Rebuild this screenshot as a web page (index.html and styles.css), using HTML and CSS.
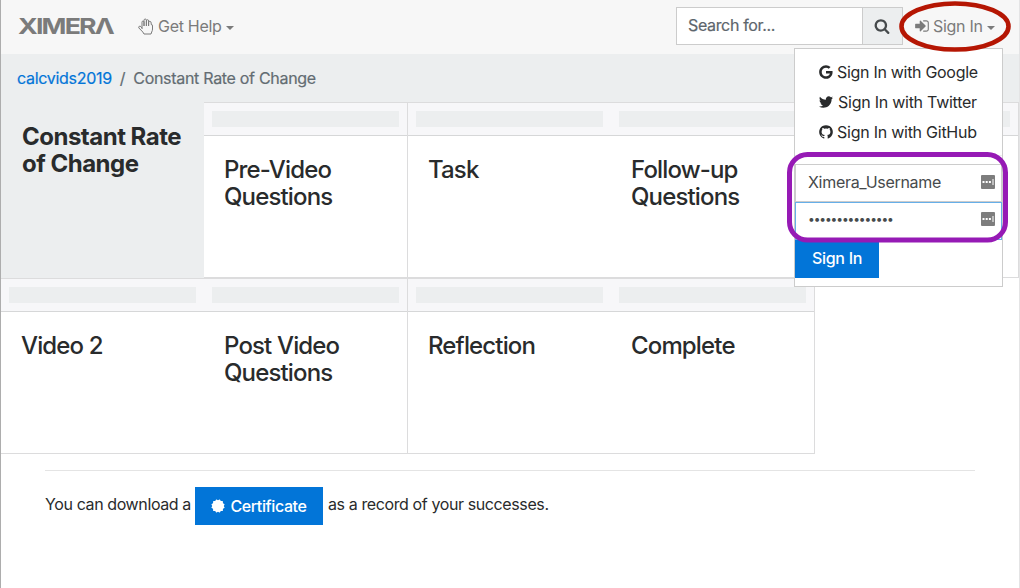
FILE: index.html
```
<!DOCTYPE html>
<html lang="en">
<head>
<meta charset="utf-8">
<title>Constant Rate of Change - Ximera</title>
<link rel="stylesheet" href="styles.css">
</head>
<body>
<div class="page">
  <nav class="navbar">
    <svg class="brand" width="96" height="20" viewBox="0 0 96 20" role="img" aria-label="XIMERA"><text x="0" y="17.500" textLength="95" lengthAdjust="spacingAndGlyphs">XIMERΛ</text></svg>
    <a class="nav-link help">
      <svg class="outline" width="16" height="17" viewBox="0 0 16 17"><path d="M4 10.500V4.200Q4 3 5 3T6 4.200V8V2.500Q6 1 7.200 1T8.400 2.500V8V2.900Q8.400 1.700 9.500 1.700T10.600 2.900V8V4.500Q10.600 3.300 11.800 3.300Q13 3.300 13.200 5V6.500Q14.500 6.300 14.500 8V11Q14.500 12.500 13.700 14L13 16H6L4.800 14L.9 10Q.3 9 1.200 8.300Q2.200 7.800 3 8.800L4 10"/></svg>
      <span>Get Help</span><i class="caret"></i>
    </a>
    <div class="search">
      <div class="search-field">Search for...</div>
      <button class="search-btn"><svg width="16" height="16" viewBox="0 0 1792 1792"><path d="M1216 832q0-185-131.500-316.500t-316.500-131.500-316.500 131.500-131.500 316.500 131.500 316.500 316.500 131.500 316.500-131.500 131.500-316.500zm512 832q0 52-38 90t-90 38q-54 0-90-38l-343-342q-179 124-399 124-143 0-273.500-55.500t-225-150-150-225-55.500-273.500 55.500-273.500 150-225 225-150 273.500-55.500 273.500 55.500 225 150 150 225 55.500 273.500q0 220-124 399l343 343q37 37 37 90z"/></svg></button>
    </div>
    <a class="nav-link signin">
      <svg width="16" height="16" viewBox="0 0 1792 1792"><path d="M1312 896q0 26-19 45l-544 544q-19 19-45 19t-45-19-19-45v-288h-448q-26 0-45-19t-19-45v-384q0-26 19-45t45-19h448v-288q0-26 19-45t45-19 45 19l544 544q19 19 19 45zm352-352v704q0 119-84.500 203.500t-203.500 84.500h-320q-13 0-22.500-9.500t-9.500-22.500q0-4-1-20t-.5-26.500 3-23.500 10-19.500 20.500-6.500h320q66 0 113-47t47-113v-704q0-66-47-113t-113-47h-312l-11.500-1-11.500-3-8-5.500-7-9-2-13.500q0-4-1-20t-.5-26.500 3-23.500 10-19.500 20.500-6.500h320q119 0 203.500 84.500t84.500 203.500z"/></svg>
      <span>Sign In</span><i class="caret"></i>
    </a>
  </nav>

  <div class="breadcrumb"><a>calcvids2019</a><span class="sep">/</span><span>Constant Rate of Change</span></div>

  <main class="cards">
    <div class="row first">
      <div class="card intro"><h2>Constant Rate of Change</h2></div>
      <div class="card"><div class="head"><i></i></div><h3>Pre-Video Questions</h3></div>
      <div class="card edge"><div class="head"><i></i></div><h3>Task</h3></div>
      <div class="card"><div class="head"><i></i></div><h3>Follow-up Questions</h3></div>
      <div class="card last"><div class="head"><i></i></div></div>
    </div>
    <div class="row second">
      <div class="card"><div class="head"><i></i></div><h3>Video 2</h3></div>
      <div class="card"><div class="head"><i></i></div><h3>Post Video Questions</h3></div>
      <div class="card edge"><div class="head"><i></i></div><h3>Reflection</h3></div>
      <div class="card last"><div class="head"><i></i></div><h3>Complete</h3></div>
    </div>
  </main>

  <footer class="record">
    <span class="before">You can download a</span>
    <a class="btn cert"><svg width="14" height="14" viewBox="-7 -7 14 14"><rect x="-4.900" y="-4.900" width="9.800" height="9.800" rx=".5"/><rect x="-4.900" y="-4.900" width="9.800" height="9.800" rx=".5" transform="rotate(30)"/><rect x="-4.900" y="-4.900" width="9.800" height="9.800" rx=".5" transform="rotate(60)"/></svg><span>Certificate</span></a>
    <span class="after">as a record of your successes.</span>
  </footer>

  <div class="menu">
    <a class="item google"><svg width="16" height="16" viewBox="0 0 1792 1792"><path d="M896 786h725q12 67 12 128 0 217-91 387.500t-259.500 266.500-386.500 96q-157 0-299-60.500t-245-163.500-163.500-245-60.500-299 60.500-299 163.500-245 245-163.500 299-60.500q300 0 515 201l-209 201q-123-119-306-119-129 0-238.500 65t-173.500 176.500-64 243.500 64 243.500 173.500 176.500 238.500 65q87 0 160-24t120-60 82-82 51.500-87 22.500-78h-436v-264z"/></svg><span>Sign In with Google</span></a>
    <a class="item twitter"><svg width="16" height="16" viewBox="0 0 1792 1792"><path d="M1684 408q-67 98-162 167 1 14 1 42 0 130-38 259.500t-115.500 248.500-184.500 210.500-258 146-323 54.500q-271 0-496-145 35 4 78 4 225 0 401-138-105-2-188-64.500t-114-159.500q33 5 61 5 43 0 85-11-112-23-185.500-111.500t-73.500-205.500v-4q68 38 146 41-66-44-105-115t-39-154q0-88 44-163 121 149 294.500 238.500t371.500 99.500q-8-38-8-74 0-134 94.500-228.500t228.500-94.500q140 0 236 102 109-21 205-78-37 115-142 178 93-10 186-50z"/></svg><span>Sign In with Twitter</span></a>
    <a class="item github"><svg width="16" height="16" viewBox="0 0 1792 1792"><path d="M896 128q209 0 385.500 103t279.500 279.500 103 385.500q0 251-146.500 451.500t-378.500 277.500q-27 5-40-7t-13-30q0-3 .5-76.500t.5-134.500q0-97-52-142 57-6 102.500-18t94-39 81-66.500 53-105 20.500-150.500q0-119-79-206 37-91-8-204-28-9-81 11t-92 44l-38 24q-93-26-192-26t-192 26q-16-11-42.500-27t-83.500-38.500-85-13.500q-45 113-8 204-79 87-79 206 0 85 20.500 150t52.500 105 80.500 67 94 39 102.500 18q-39 36-49 103-21 10-45 15t-57 5-65.500-21.500-55.500-62.500q-19-32-48.500-52t-49.500-24l-20-3q-21 0-29 4.500t-5 11.500 9 14 13 12l7 5q22 10 43.500 38t31.500 51l10 23q13 38 44 61.500t67 30 69.500 7 55.500-3.500l23-4q0 38 .5 88.500t.5 54.500q0 18-13 30t-40 7q-232-77-378.500-277.500t-146.500-451.500q0-209 103-385.500t279.500-279.500 385.500-103z"/></svg><span>Sign In with GitHub</span></a>
    <div class="divider"></div>
    <div class="field"><span>Ximera_Username</span><svg width="14" height="14" viewBox="0 0 14 14"><rect width="14" height="14" rx="1" fill="#7d7d7d"/><path d="M1.500 6h2v2h-2zM4.700 6h2v2h-2zM7.900 6h2v2h-2zM11.500 4h1v6h-1z" fill="#fff"/></svg></div>
    <div class="field active"><span class="dots">•••••••••••••••</span><svg width="14" height="14" viewBox="0 0 14 14"><rect width="14" height="14" rx="1" fill="#7d7d7d"/><path d="M1.500 6h2v2h-2zM4.700 6h2v2h-2zM7.900 6h2v2h-2zM11.500 4h1v6h-1z" fill="#fff"/></svg></div>
    <a class="btn submit"><span>Sign In</span></a>
  </div>

  <svg class="marks" width="1020" height="588"><ellipse cx="955" cy="26.500" rx="53.500" ry="23" stroke="#b51603" stroke-width="4.600"/><rect x="789.500" y="154.500" width="216" height="85.500" rx="18" stroke="#961ab5" stroke-width="5"/></svg>
</div>
</body>
</html>
```
FILE: styles.css
```
* { box-sizing: border-box; }
body { margin: 0; background: #fff; color: #292b2c; font: 16px/24px Inter, "Liberation Sans", sans-serif; letter-spacing: -0.3px; }
svg { fill: currentColor; flex: none; }
.page { position: relative; width: 1020px; height: 588px; overflow: hidden; border-left: 1px solid #adadad; border-right: 1px solid #e4e4e5; }
.navbar { height: 54px; background: #f7f7f7; display: flex; align-items: flex-start; padding: 7px 0 0 17px; }
.brand { margin-top: 9px; overflow: visible; fill: #7b7b7b; font: 700 22px Inter, sans-serif; letter-spacing: -1.5px; }
.nav-link { display: flex; align-items: center; height: 38px; color: #7b7b7b; white-space: nowrap; }
.help { margin-left: 24px; gap: 4px; }
.outline { fill: none; stroke: currentColor; stroke-width: 1; stroke-linejoin: round; stroke-linecap: round; }
.caret { border: 4px solid transparent; border-top-color: currentColor; border-bottom: 0; margin-top: 3px; }
.search { margin-left: auto; display: flex; width: 227px; height: 38px; border: 1px solid #ccc; background: #fff; }
.search-field { flex: 1; padding: 5px 11px; color: #5d656c; letter-spacing: -0.35px; -webkit-text-stroke: 0.2px; }
.search-btn { width: 40px; padding: 0 1px 0 0; border: 0; border-left: 1px solid #ccc; background: #eceeef; color: #464a4c; display: grid; place-items: center; }
.signin { width: 116px; padding-left: 11px; gap: 3px; }
.signin .caret { margin-left: 1px; }
.breadcrumb { height: 48px; background: #eceeef; padding: 12px 16px; color: #636c72; display: flex; gap: 8px; -webkit-text-stroke: 0.2px; }
.breadcrumb a { color: #0275d8; }
.cards { display: flex; flex-direction: column; }
.row { display: grid; height: 176px; }
.first { grid-template-columns: 203px 203px 204px 203px 205px; }
.second { grid-template-columns: 203px 203px 204px 204px; }
.card { border-top: 1px solid #dcdcdd; border-bottom: 1px solid #dcdcdd; }
.intro { background: #eceeef; border: 0; }
.edge { border-left: 1px solid #dcdcdd; }
.last { border-right: 1px solid #dcdcdd; }
.head { height: 33px; padding: 8px; background: #f7f7f9; border-bottom: 1px solid #d6d7d8; }
.head i { display: block; height: 16px; background: #eceeef; }
h2, h3 { margin: 0; font-size: 24px; line-height: 27px; }
h2 { font-weight: 700; letter-spacing: -0.5px; padding: 21px 10px 0 21px; }
h3 { font-weight: 500; letter-spacing: -0.85px; padding: 20px 20px 0; }
.record { margin: 16px 44px 0; border-top: 1px solid #e4e4e4; padding-top: 16px; display: flex; white-space: nowrap; letter-spacing: -0.39px; }
.before, .after { padding-top: 5px; }
.btn { background: #0275d8; color: #fff; height: 38px; display: flex; align-items: center; justify-content: center; font-weight: 500; }
.cert { width: 128px; margin: 0 5px 0 4px; gap: 5px; }
.menu { position: absolute; left: 793px; top: 48px; width: 209px; height: 239px; border: 1px solid #ccc; background: #fff; padding-top: 8px; white-space: nowrap; }
.item { height: 30px; padding-left: 23px; display: flex; align-items: center; gap: 3px; }
.twitter { gap: 4px; letter-spacing: -0.25px; }
.github { letter-spacing: -0.25px; }
.divider { height: 1px; margin: 8px 0; background: #eceeef; }
.field { height: 38px; border: 1px solid #ccc; padding: 0 6px 3px 12px; display: flex; align-items: center; justify-content: space-between; color: #464a4c; }
.active { border-color: #66afe9; padding-bottom: 5px; }
.submit { width: 84px; padding-bottom: 2px; }
.dots { font-size: 12px; letter-spacing: -1.1px; }
.marks { position: absolute; left: -1px; top: 0; fill: none; }
```
